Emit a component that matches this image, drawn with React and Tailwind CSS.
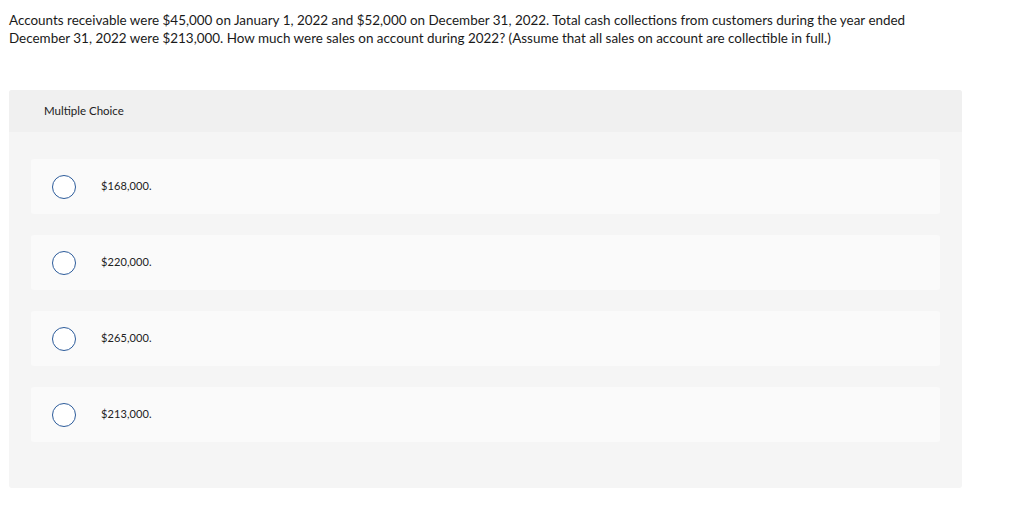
import React from "react";

const options = ["$168,000.", "$220,000.", "$265,000.", "$213,000."];

function Option({ label }) {
  return (
    <div className="flex h-[55px] items-center rounded-[3px] bg-[#fafafa]">
      <span className="ml-[21px] h-[24px] w-[24px] rounded-full border border-[#2c5b9a] bg-white"></span>
      <span className="ml-[25px] text-[11px] tracking-[0.1px] text-[#222]">{label}</span>
    </div>
  );
}

export default function App() {
  return (
    <div className="min-h-[520px] bg-white text-[#1a1a1a]" style={{ fontFamily: "Lato, 'Open Sans', sans-serif" }}>
      <p className="px-[9px] pt-[11px] text-[13.45px] leading-[18px]">
        Accounts receivable were $45,000 on January 1, 2022 and $52,000 on December 31, 2022. Total cash collections from customers during the year ended
        <br />
        December 31, 2022 were $213,000. How much were sales on account during 2022? (Assume that all sales on account are collectible in full.)
      </p>
      <div className="ml-[9px] mt-[43px] w-[953px] rounded-[3px] bg-[#f5f5f5]">
        <div className="flex h-[42px] items-center rounded-t-[3px] bg-[#f0f0f0] pl-[35px] text-[11.5px] text-[#222]">
          Multiple Choice
        </div>
        <div className="flex flex-col gap-[21px] px-[22px] pb-[46px] pt-[27px]">
          {options.map((o) => (
            <Option key={o} label={o} />
          ))}
        </div>
      </div>
    </div>
  );
}
